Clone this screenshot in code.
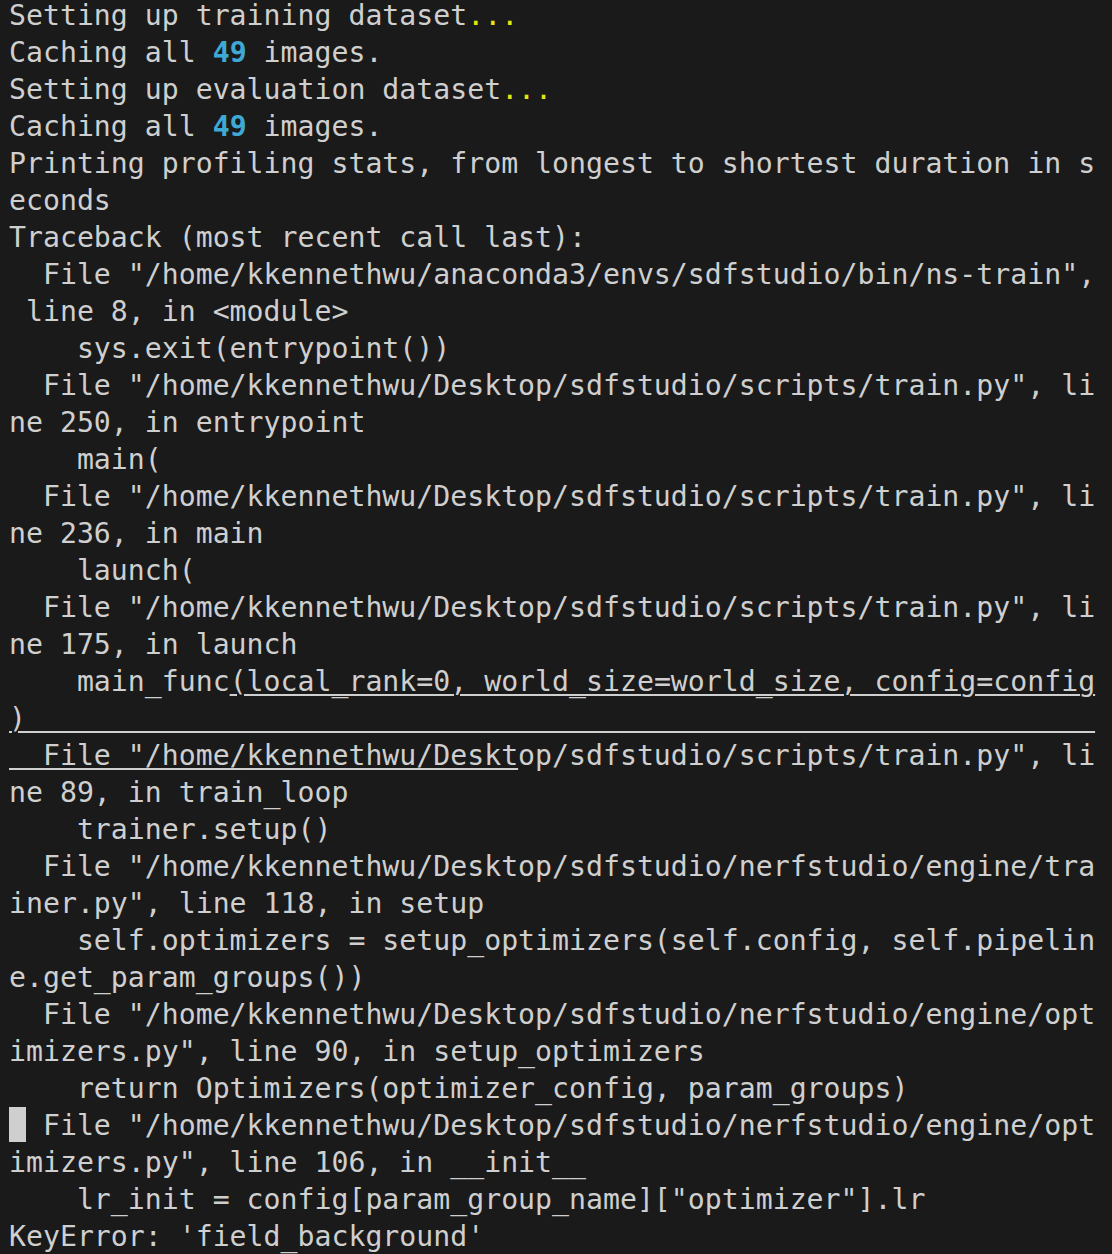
import React from "react";

const Y = ({ children }: { children: React.ReactNode }) => (
  <span className="text-[#e5e510]">{children}</span>
);
const B = ({ children }: { children: React.ReactNode }) => (
  <span className="font-bold text-[#3fa9d6]">{children}</span>
);
const U = ({ children }: { children: React.ReactNode }) => (
  <span className="underline decoration-2 underline-offset-[3px]">{children}</span>
);

const Line = ({ children }: { children?: React.ReactNode }) => (
  <div className="h-[37px] leading-[37px] whitespace-pre">{children}</div>
);

export default function App() {
  const fileTrain = '  File "/home/kkennethwu/Desktop/sdfstudio/scripts/train.py", li';
  return (
    <div className="w-[1112px] h-[1254px] overflow-hidden bg-[#1a1a1a]">
      <div
        className="mt-[-3px] pl-[9px] text-[28.2px] text-[#cfcfcf]"
        style={{ fontFamily: '"DejaVu Sans Mono", "Liberation Mono", monospace' }}
      >
        <Line>
          Setting up training dataset<Y>...</Y>
        </Line>
        <Line>
          Caching all <B>49</B> images.
        </Line>
        <Line>
          Setting up evaluation dataset<Y>...</Y>
        </Line>
        <Line>
          Caching all <B>49</B> images.
        </Line>
        <Line>Printing profiling stats, from longest to shortest duration in s</Line>
        <Line>econds</Line>
        <Line>Traceback (most recent call last):</Line>
        <Line>{'  File "/home/kkennethwu/anaconda3/envs/sdfstudio/bin/ns-train",'}</Line>
        <Line>{' line 8, in <module>'}</Line>
        <Line>{'    sys.exit(entrypoint())'}</Line>
        <Line>{fileTrain}</Line>
        <Line>ne 250, in entrypoint</Line>
        <Line>{'    main('}</Line>
        <Line>{fileTrain}</Line>
        <Line>ne 236, in main</Line>
        <Line>{'    launch('}</Line>
        <Line>{fileTrain}</Line>
        <Line>ne 175, in launch</Line>
        <Line>
          {'    main_func'}
          <U>(local_rank=0, world_size=world_size, config=config</U>
        </Line>
        <Line>
          <U>{')' + ' '.repeat(63)}</U>
        </Line>
        <Line>
          <U>{'  File "/home/kkennethwu/Deskt'}</U>
          {'op/sdfstudio/scripts/train.py", li'}
        </Line>
        <Line>ne 89, in train_loop</Line>
        <Line>{'    trainer.setup()'}</Line>
        <Line>{'  File "/home/kkennethwu/Desktop/sdfstudio/nerfstudio/engine/tra'}</Line>
        <Line>{'iner.py", line 118, in setup'}</Line>
        <Line>{'    self.optimizers = setup_optimizers(self.config, self.pipelin'}</Line>
        <Line>e.get_param_groups())</Line>
        <Line>{'  File "/home/kkennethwu/Desktop/sdfstudio/nerfstudio/engine/opt'}</Line>
        <Line>{'imizers.py", line 90, in setup_optimizers'}</Line>
        <Line>{'    return Optimizers(optimizer_config, param_groups)'}</Line>
        <Line>
          <span className="inline-block w-[1ch] h-[35px] align-top bg-[#cfcfcf]"></span>
          {' File "/home/kkennethwu/Desktop/sdfstudio/nerfstudio/engine/opt'}
        </Line>
        <Line>{'imizers.py", line 106, in __init__'}</Line>
        <Line>{'    lr_init = config[param_group_name]["optimizer"].lr'}</Line>
        <Line>{"KeyError: 'field_background'"}</Line>
      </div>
    </div>
  );
}
